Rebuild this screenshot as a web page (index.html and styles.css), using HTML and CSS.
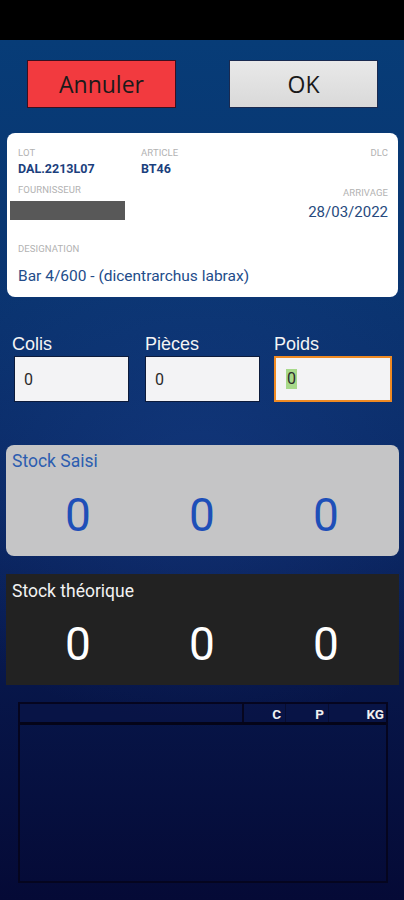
FILE: index.html
```html
<!DOCTYPE html>
<html lang="fr">
<head>
<meta charset="utf-8">
<link rel="stylesheet" href="styles.css">
</head>
<body>
<div class="statusbar"></div>
<main class="screen">
  <div class="actions">
    <button class="btn btn-cancel">Annuler</button>
    <button class="btn btn-ok">OK</button>
  </div>

  <section class="card">
    <div class="row row-top">
      <div class="field f-lot">
        <div class="lbl">LOT</div>
        <div class="val-bold">DAL.2213L07</div>
      </div>
      <div class="field f-art">
        <div class="lbl">ARTICLE</div>
        <div class="val-bold">BT46</div>
      </div>
      <div class="field f-dlc">
        <div class="lbl">DLC</div>
      </div>
    </div>
    <div class="row row-mid">
      <div class="field f-four">
        <div class="lbl">FOURNISSEUR</div>
        <div class="masked"></div>
      </div>
      <div class="field f-arr">
        <div class="lbl">ARRIVAGE</div>
        <div class="val-date">28/03/2022</div>
      </div>
    </div>
    <div class="field f-des">
      <div class="lbl">DESIGNATION</div>
      <div class="val-des">Bar 4/600 - (dicentrarchus labrax)</div>
    </div>
  </section>

  <div class="inputs">
    <div class="in-group g1">
      <label class="in-lbl">Colis</label>
      <div class="in-box">0</div>
    </div>
    <div class="in-group g2">
      <label class="in-lbl">Pièces</label>
      <div class="in-box">0</div>
    </div>
    <div class="in-group g3">
      <label class="in-lbl">Poids</label>
      <div class="in-box focus"><span class="sel">0</span></div>
    </div>
  </div>

  <section class="panel saisi">
    <div class="panel-title">Stock Saisi</div>
    <div class="nums">
      <span>0</span><span>0</span><span>0</span>
    </div>
  </section>

  <section class="panel theo">
    <div class="panel-title">Stock théorique</div>
    <div class="nums">
      <span>0</span><span>0</span><span>0</span>
    </div>
  </section>

  <section class="table">
    <div class="thead">
      <div class="th th-name"></div>
      <div class="th">C</div>
      <div class="th">P</div>
      <div class="th th-kg">KG</div>
    </div>
    <div class="tbody"></div>
  </section>
</main>
</body>
</html>
```

FILE: styles.css
```css
* { box-sizing: border-box; }
html, body {
  margin: 0;
  padding: 0;
  width: 404px;
  height: 900px;
  overflow: hidden;
  font-family: Roboto, "Liberation Sans", sans-serif;
}
body {
  background: #000;
}
.statusbar {
  height: 40px;
  background: #000;
}
.screen {
  height: 860px;
  background:
    radial-gradient(ellipse 300px 260px at 200px 430px, rgba(30,70,150,0.35), rgba(30,70,150,0) 100%),
    linear-gradient(180deg, #073c77 0%, #0a3470 30%, #0a2763 55%, #071649 75%, #050a36 100%);
  padding-top: 20px;
}
.actions {
  display: flex;
  padding-left: 27px;
  gap: 53px;
}
.btn {
  width: 149px;
  height: 48px;
  border: 1px solid #101830;
  font-family: "Open Sans", "Liberation Sans", sans-serif;
  font-size: 23px;
  color: #1a1a1a;
  padding: 0;
  border-radius: 0;
}
.btn-cancel {
  background: #f23a3f;
  border-color: #3a1020;
}
.btn-ok {
  background: linear-gradient(180deg, #e9e9e9, #d9d9d9);
  border-color: #1a2a50;
}

.card {
  margin: 25px 6px 0 7px;
  height: 164px;
  background: #fff;
  border-radius: 8px;
  padding: 14px 10px 0 11px;
  position: relative;
}
.lbl {
  font-size: 9.5px;
  color: #b2b2b2;
  letter-spacing: 0.1px;
  line-height: 12px;
}
.val-bold {
  font-size: 12.5px;
  font-weight: 700;
  color: #1b3f7d;
  line-height: 16px;
  margin-top: 2px;
}
.row {
  display: flex;
}
.row-top .f-lot { width: 123px; }
.row-top .f-art { flex: 1; }
.row-top .f-dlc { text-align: right; }
.row-mid {
  margin-top: 7px;
  justify-content: space-between;
}
.masked {
  width: 115px;
  height: 19px;
  background: #585858;
  margin-left: -8px;
  margin-top: 5px;
}
.f-arr {
  text-align: right;
  padding-top: 3px;
}
.val-date {
  font-size: 15px;
  color: #274a7e;
  margin-top: 4px;
  line-height: 18px;
}
.f-des {
  margin-top: 22px;
}
.val-des {
  font-size: 15.5px;
  color: #234c8a;
  margin-top: 11px;
  line-height: 20px;
}

.inputs {
  display: flex;
  margin-top: 36px;
  padding-left: 12px;
}
.in-group {
  display: flex;
  flex-direction: column;
}
.g1 { width: 133px; }
.g2 { width: 129px; }
.g3 { width: 120px; }
.in-lbl {
  font-family: "Liberation Sans", Arial, sans-serif;
  font-size: 18px;
  color: #f4f4f4;
  line-height: 22px;
  height: 23px;
}
.in-box {
  width: 115px;
  height: 46px;
  background: #f3f3f5;
  border: 1px solid #0c1b3c;
  font-size: 16px;
  color: #2a2a2a;
  padding-left: 9px;
  display: flex;
  align-items: center;
}
.g1 .in-box { margin-left: 2px; }
.in-box.focus {
  width: 118px;
  border: 2px solid #ef8a23;
  padding-left: 10px;
}
.sel {
  background: #a7d98a;
  padding: 0 1px;
  line-height: 20px;
}

.panel {
  margin: 43px 5px 0 6px;
  height: 111px;
  padding: 5px 0 0 0;
}
.saisi {
  background: #c5c5c6;
  border-radius: 8px;
}
.theo {
  margin-top: 18px;
  background: #222222;
}
.panel-title {
  font-size: 17.5px;
  line-height: 22px;
  padding-left: 6px;
}
.saisi .panel-title { color: #2c5db0; }
.theo .panel-title { color: #f2f2f2; padding-top: 1px; }
.nums {
  display: grid;
  grid-template-columns: repeat(3, 1fr);
  text-align: center;
  font-size: 46px;
  line-height: 54px;
  margin-top: 16px;
  padding: 0 11px 0 10px;
}
.theo .nums { margin-top: 15px; }
.saisi .nums { color: #1e4fb8; }
.theo .nums { color: #ffffff; }

.table {
  margin: 17px 16px 0 18px;
  height: 181px;
  border: 2px solid #05051f;
  display: flex;
  flex-direction: column;
}
.thead {
  display: flex;
  height: 21px;
  border-bottom: 3px solid #040418;
  background: rgba(10, 20, 70, 0.6);
}
.th {
  color: #f0f0f0;
  font-size: 13.5px;
  font-weight: 700;
  line-height: 20px;
  text-align: right;
  width: 43px;
  padding-right: 4px;
  border-left: 1px solid rgba(5,5,30,0.5);
}
.th-name {
  width: 222px;
  border-left: none;
}
.th-kg {
  flex: 1;
  padding-right: 2px;
}
.th:nth-child(2) { border-left: 2px solid #06061f; }
.tbody {
  flex: 1;
}
```
